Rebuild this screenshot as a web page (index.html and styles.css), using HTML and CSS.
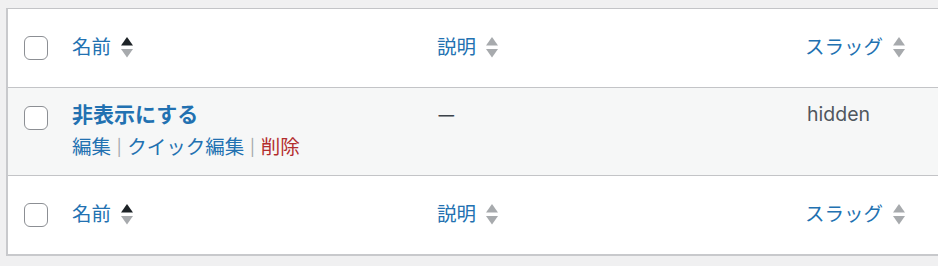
FILE: index.html
```html
<!DOCTYPE html>
<html lang="ja">
<head>
    <meta charset="UTF-8">
    <meta name="viewport" content="width=device-width, initial-scale=1.0">
    <title>タグ</title>
    <link rel="stylesheet" href="styles.css">
</head>
<body>
    <table class="list-table">
        <colgroup>
            <col class="col-check">
            <col class="col-name">
            <col class="col-desc">
            <col class="col-slug">
        </colgroup>
        <thead>
            <tr>
                <td class="check-column"><input type="checkbox" class="cb"></td>
                <th class="column-name">
                    <a href="#" class="sort-link">
                        <span>名前</span>
                        <span class="sort-ind asc">
                            <svg width="12" height="21" viewBox="0 0 12 21"><polygon class="up" points="0,8.5 6,0 12,8.5"/><polygon class="down" points="0,12 12,12 6,20.5"/></svg>
                        </span>
                    </a>
                </th>
                <th class="column-desc">
                    <a href="#" class="sort-link">
                        <span>説明</span>
                        <span class="sort-ind">
                            <svg width="12" height="21" viewBox="0 0 12 21"><polygon class="up" points="0,8.5 6,0 12,8.5"/><polygon class="down" points="0,12 12,12 6,20.5"/></svg>
                        </span>
                    </a>
                </th>
                <th class="column-slug">
                    <a href="#" class="sort-link">
                        <span>スラッグ</span>
                        <span class="sort-ind">
                            <svg width="12" height="21" viewBox="0 0 12 21"><polygon class="up" points="0,8.5 6,0 12,8.5"/><polygon class="down" points="0,12 12,12 6,20.5"/></svg>
                        </span>
                    </a>
                </th>
            </tr>
        </thead>
        <tbody>
            <tr>
                <td class="check-column"><input type="checkbox" class="cb"></td>
                <td class="column-name">
                    <a href="#" class="row-title">非表示にする</a>
                    <div class="row-actions">
                        <a href="#">編集</a> <span class="sep">|</span> <a href="#">クイック編集</a> <span class="sep">|</span> <a href="#" class="delete">削除</a>
                    </div>
                </td>
                <td class="column-desc"><span class="dash">—</span></td>
                <td class="column-slug">hidden</td>
            </tr>
        </tbody>
        <tfoot>
            <tr>
                <td class="check-column"><input type="checkbox" class="cb"></td>
                <th class="column-name">
                    <a href="#" class="sort-link">
                        <span>名前</span>
                        <span class="sort-ind asc">
                            <svg width="12" height="21" viewBox="0 0 12 21"><polygon class="up" points="0,8.5 6,0 12,8.5"/><polygon class="down" points="0,12 12,12 6,20.5"/></svg>
                        </span>
                    </a>
                </th>
                <th class="column-desc">
                    <a href="#" class="sort-link">
                        <span>説明</span>
                        <span class="sort-ind">
                            <svg width="12" height="21" viewBox="0 0 12 21"><polygon class="up" points="0,8.5 6,0 12,8.5"/><polygon class="down" points="0,12 12,12 6,20.5"/></svg>
                        </span>
                    </a>
                </th>
                <th class="column-slug">
                    <a href="#" class="sort-link">
                        <span>スラッグ</span>
                        <span class="sort-ind">
                            <svg width="12" height="21" viewBox="0 0 12 21"><polygon class="up" points="0,8.5 6,0 12,8.5"/><polygon class="down" points="0,12 12,12 6,20.5"/></svg>
                        </span>
                    </a>
                </th>
            </tr>
        </tfoot>
    </table>
</body>
</html>
```

FILE: styles.css
```css
html, body {
    overflow: hidden;
}

body {
    margin: 8px 0 0 6px;
    background: #f0f0f1;
    font-family: Inter, "Noto Sans CJK JP", sans-serif;
    font-size: 19.5px;
    line-height: 1.4;
    color: #50575e;
}

/* the table runs on past the right edge, so no right border is drawn */
.list-table {
    width: 932px;
    table-layout: fixed;
    border-collapse: separate;
    border-spacing: 0;
    background: #fff;
    border-top: 1px solid #c3c4c7;
    border-left: 2px solid #c8c9cc;
    border-bottom: 2px solid #c8c9cc;
}

.col-check { width: 50px; }
.col-name { width: 365px; }
.col-desc { width: 368px; }
.col-slug { width: 147px; }

a {
    color: #2271b1;
    text-decoration: none;
}

th, td {
    text-align: left;
    font-weight: normal;
    padding: 0 0 0 14px;
    white-space: nowrap;
}

thead th, thead td,
tfoot th, tfoot td {
    height: 78px;
    vertical-align: middle;
}

thead th, thead td {
    border-bottom: 1px solid #c3c4c7;
}

tfoot th, tfoot td {
    border-top: 1px solid #c3c4c7;
}

.check-column {
    padding-left: 16px;
}

.cb {
    appearance: none;
    display: block;
    width: 24px;
    height: 24px;
    margin: 0;
    border: 1.5px solid #8c8f94;
    border-radius: 6px;
    background: #fff;
    box-sizing: border-box;
}

.sort-link {
    display: flex;
    align-items: center;
    gap: 10px;
}

.sort-ind svg {
    display: block;
}

.sort-ind polygon {
    fill: #a7aaad;
}

.sort-ind.asc .up {
    fill: #1d2327;
}

tbody tr {
    background: #f6f7f7;
}

tbody td {
    vertical-align: top;
    padding-top: 12px;
    height: 74px;
}

tbody .check-column {
    padding-top: 18px;
    height: 68px;
}

.row-title {
    font-size: 21px;
    font-weight: 700;
    line-height: 1.4;
    display: block;
}

.row-actions {
    padding-top: 5px;
    color: #a7aaad;
}

.row-actions .sep {
    font-size: 16px;
    vertical-align: 1px;
}

.row-actions .delete {
    color: #b32d2e;
}

.dash {
    display: inline-block;
    color: #3c434a;
    padding: 2px 0 0 2px;
    transform: scaleX(0.8);
    transform-origin: left;
}

tbody .column-slug {
    padding-top: 13px;
    padding-left: 16px;
}
```
